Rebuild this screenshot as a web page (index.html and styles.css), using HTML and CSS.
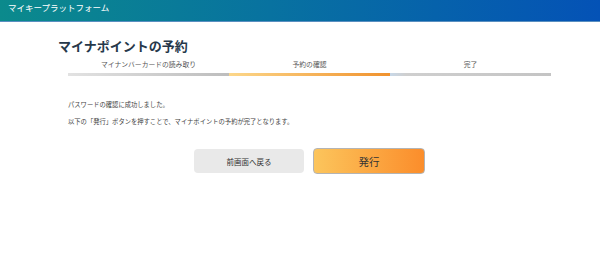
FILE: index.html
```html
<!DOCTYPE html>
<html lang="ja">
<head>
  <meta charset="UTF-8">
  <meta name="viewport" content="width=device-width, initial-scale=1.0">
  <title>マイナポイントの予約</title>
  <link rel="stylesheet" href="styles.css">
</head>
<body>

<header class="site-header">マイキープラットフォーム</header>

<main class="content">
  <h1 class="page-title">マイナポイントの予約</h1>

  <div class="steps">
    <!-- step labels -->
    <div class="step-labels">
      <span>マイナンバーカードの読み取り</span>
      <span>予約の確認</span>
      <span>完了</span>
    </div>
    <div class="step-bar">
      <div class="seg seg-done"></div>
      <div class="seg seg-current"></div>
      <div class="seg seg-next"></div>
    </div>

    <div class="message">
      <p>パスワードの確認に成功しました。</p>
      <p>以下の「発行」ボタンを押すことで、マイナポイントの予約が完了となります。</p>
    </div>

    <div class="actions">
      <button class="btn btn-back">前画面へ戻る</button>
      <button class="btn btn-issue">発行</button>
    </div>
  </div>
</main>

</body>
</html>
```

FILE: styles.css
```css
body {
  margin: 0;
  padding: 0;
  font-family: "Noto Sans CJK JP", "Noto Sans", sans-serif;
  background: #fff;
  color: #333;
}

.site-header {
  height: 22px;
  box-sizing: border-box;
  padding: 1px 8px 0;
  line-height: 12px;
  font-size: 8.5px;
  color: #fff;
  background: linear-gradient(90deg, #0b8a8c 0%, #0872a0 45%, #0452b6 100%);
  border-bottom: 1px solid #5a8fc0;
}

.content {
  padding-left: 58px;
}

.page-title {
  margin: 16px 0 0;
  font-size: 13px;
  line-height: 16px;
  font-weight: 700;
  color: #26384a;
}

.steps {
  width: 483px;
  margin-left: 10px;
}

.step-labels {
  display: flex;
  margin-top: 5px;
  font-size: 6.8px;
  line-height: 10px;
  color: #555;
}

.step-labels span {
  flex: 1;
  text-align: center;
}

.step-bar {
  display: flex;
  height: 3px;
  margin-top: 4px;
}

.seg {
  flex: 1;
}

.seg-done {
  background: linear-gradient(90deg, #e2e2e2, #bdbdbd);
}

.seg-current {
  background: linear-gradient(90deg, #fcd78a, #f0922e);
}

.seg-next {
  background: linear-gradient(90deg, #c8d8e8, #cfcfcf 10%, #c4c4c4);
}

.message {
  margin-top: 20px;
  font-size: 6.3px;
  line-height: 17px;
  color: #444;
}

.message p {
  margin: 0;
}

.actions {
  display: flex;
  justify-content: center;
  align-items: center;
  gap: 9px;
  margin-top: 18px;
}

.btn {
  width: 110px;
  height: 24px;
  padding: 0;
  border: none;
  border-radius: 4px;
  font-family: inherit;
  color: #333;
  cursor: pointer;
}

.btn-back {
  background: #e9e9e9;
  font-size: 7.5px;
}

.btn-issue {
  box-sizing: content-box;
  border: 1px solid #b4b4b4;
  background: linear-gradient(90deg, #fcc55c, #fb8d2b);
  font-size: 10.5px;
}
```
